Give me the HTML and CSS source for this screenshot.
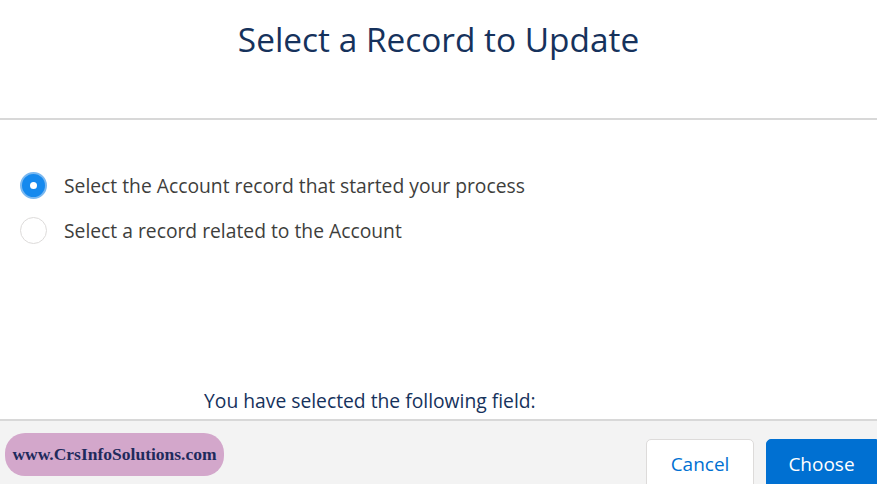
FILE: index.html
```html
<!DOCTYPE html>
<html>
<head>
<meta charset="utf-8">
<link rel="stylesheet" href="styles.css">
</head>
<body>
<div class="modal">
  <header class="head">
    <h1 class="title">Select a Record to Update</h1>
  </header>
  <main class="body">
    <div class="options">
      <label class="opt">
        <span class="radio checked"><span class="dot"></span></span>
        <span class="opt-label">Select the Account record that started your process</span>
      </label>
      <label class="opt">
        <span class="radio"></span>
        <span class="opt-label">Select a record related to the Account</span>
      </label>
    </div>
    <p class="selected">You have selected the following field:</p>
  </main>
  <footer class="foot">
    <div class="brand">www.CrsInfoSolutions.com</div>
    <div class="actions">
      <button class="btn cancel">Cancel</button>
      <button class="btn choose">Choose</button>
    </div>
  </footer>
</div>
</body>
</html>
```
FILE: styles.css
```css
* { box-sizing: border-box; }
html, body { margin: 0; padding: 0; }
body {
  width: 877px;
  height: 484px;
  overflow: hidden;
  background: #fff;
  font-family: "Open Sans", "Noto Sans", sans-serif;
}
.modal { display: flex; flex-direction: column; height: 484px; }
.head {
  height: 120px;
  flex: none;
  border-bottom: 2px solid #d8d8d8;
  display: flex;
  justify-content: center;
  padding-top: 17px;
}
.title {
  margin: 0;
  font-weight: 400;
  font-size: 33.4px;
  color: #16325c;
  line-height: 44px;
}
.body {
  height: 299px;
  flex: none;
  display: flex;
  flex-direction: column;
  padding: 52px 0 0 20px;
}
.options { display: flex; flex-direction: column; gap: 18px; }
.opt { display: flex; align-items: center; gap: 17px; height: 27px; }
.radio {
  width: 27px;
  height: 27px;
  flex: none;
  border-radius: 50%;
  border: 1px solid #dddbda;
  background: #fff;
  display: flex;
  align-items: center;
  justify-content: center;
}
.radio.checked {
  background: #1589ee;
  border: 2px solid #7ab8f0;
}
.dot { width: 7px; height: 7px; border-radius: 50%; background: #fff; }
.opt-label { font-size: 19.3px; color: #3e3e3c; line-height: 27px; }
.selected {
  margin: auto 0 5px 184px;
  font-size: 19.3px;
  color: #16325c;
  line-height: 26px;
}
.foot {
  flex: 1;
  background: #f3f3f3;
  border-top: 2px solid #d8d8d8;
  display: flex;
  justify-content: space-between;
  padding: 12px 0 0 5px;
}
.brand {
  width: 219px;
  height: 43px;
  background: #d3a7cb;
  border-radius: 20px;
  font-family: "Liberation Serif", serif;
  font-weight: 700;
  font-size: 17.5px;
  color: #1f2a5c;
  display: flex;
  align-items: center;
  justify-content: center;
}
.actions { display: flex; gap: 12px; padding-top: 6px; }
.btn {
  font-family: "Open Sans", "Noto Sans", sans-serif;
  font-size: 19px;
  height: 50px;
  border-radius: 5px;
  padding: 0;
}
.cancel {
  width: 108px;
  background: #fff;
  border: 1px solid #dddbda;
  color: #0070d2;
}
.choose {
  width: 111px;
  background: #0070d2;
  border: 1px solid #0070d2;
  color: #fff;
  border-radius: 5px 0 0 5px;
}
```
